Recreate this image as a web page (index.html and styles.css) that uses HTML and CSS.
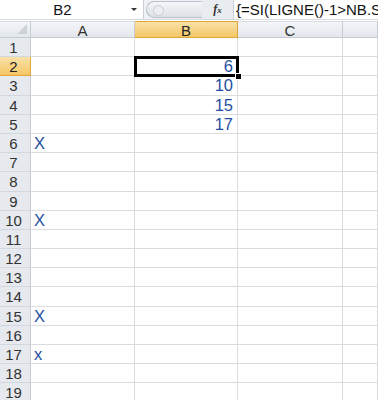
FILE: index.html
```html
<!DOCTYPE html>
<html lang="fr">
  <head>
    <meta charset="UTF-8">
    <title>Feuil1</title>
    <link rel="stylesheet" href="styles.css">
  </head>
  <body>

    <div class="formula-bar">
      <div class="name-box">
        <span class="name-text">B2</span>
        <span class="name-arrow"></span>
      </div>
      <div class="fn-pill"><span class="fn-dot"></span></div>
      <div class="fx">f<i>x</i></div>
      <div class="formula-input">{=SI(LIGNE()-1&gt;NB.S</div>
    </div>

    <div class="sheet">
      <div class="hd corner"><span class="corner-tri"></span></div>
      <div class="hd col">A</div>
      <div class="hd col active">B</div>
      <div class="hd col">C</div>
      <div class="hd col"></div>

      <div class="hd row">1</div><div class="c"></div><div class="c"></div><div class="c"></div><div class="c"></div>
      <div class="hd row active">2</div><div class="c"></div><div class="c num sel">6<span class="handle"></span></div><div class="c"></div><div class="c"></div>
      <div class="hd row">3</div><div class="c"></div><div class="c num">10</div><div class="c"></div><div class="c"></div>
      <div class="hd row">4</div><div class="c"></div><div class="c num">15</div><div class="c"></div><div class="c"></div>
      <div class="hd row">5</div><div class="c"></div><div class="c num">17</div><div class="c"></div><div class="c"></div>
      <div class="hd row">6</div><div class="c txt">X</div><div class="c"></div><div class="c"></div><div class="c"></div>
      <div class="hd row">7</div><div class="c"></div><div class="c"></div><div class="c"></div><div class="c"></div>
      <div class="hd row">8</div><div class="c"></div><div class="c"></div><div class="c"></div><div class="c"></div>
      <div class="hd row">9</div><div class="c"></div><div class="c"></div><div class="c"></div><div class="c"></div>
      <div class="hd row">10</div><div class="c txt">X</div><div class="c"></div><div class="c"></div><div class="c"></div>
      <div class="hd row">11</div><div class="c"></div><div class="c"></div><div class="c"></div><div class="c"></div>
      <div class="hd row">12</div><div class="c"></div><div class="c"></div><div class="c"></div><div class="c"></div>
      <div class="hd row">13</div><div class="c"></div><div class="c"></div><div class="c"></div><div class="c"></div>
      <div class="hd row">14</div><div class="c"></div><div class="c"></div><div class="c"></div><div class="c"></div>
      <div class="hd row">15</div><div class="c txt">X</div><div class="c"></div><div class="c"></div><div class="c"></div>
      <div class="hd row">16</div><div class="c"></div><div class="c"></div><div class="c"></div><div class="c"></div>
      <div class="hd row">17</div><div class="c txt">x</div><div class="c"></div><div class="c"></div><div class="c"></div>
      <div class="hd row">18</div><div class="c"></div><div class="c"></div><div class="c"></div><div class="c"></div>
      <div class="hd row">19</div><div class="c"></div><div class="c"></div><div class="c"></div><div class="c"></div>
    </div>

  </body>
</html>
```

FILE: styles.css
```css
html, body { margin: 0; height: 100%; overflow: hidden }
body { background: #fff; font-family: "Liberation Sans", Arial, sans-serif; width: 378px }

/* formula bar */

.formula-bar {
  display: flex;
  height: 19px;
  background: #eef1f5;
  border-bottom: 1px solid #d6dbe2;
  margin-bottom: 1px;
  overflow: hidden;
}
.name-box {
  width: 143px;
  background: #fff;
  border-right: 1px solid #c9d0d8;
  display: flex;
  align-items: center;
  position: relative;
}
.name-text { flex: 1; text-align: center; font-size: 15px; color: #111; padding-right: 18px }
.name-arrow {
  position: absolute; right: 6px; top: 8px;
  border-left: 3px solid transparent; border-right: 3px solid transparent; border-top: 3px solid #333;
}
.fn-pill {
  width: 55px; margin: 1px 0 1px 2px;
  border: 1px solid #b9c1cc; border-right: none;
  border-radius: 9px 0 0 9px;
  background: linear-gradient(#f4f6f8, #dde1e6);
  position: relative;
}
.fn-dot {
  position: absolute; left: 6px; top: 3px; width: 9px; height: 9px; border-radius: 50%;
  background: #eceef1; border: 1px solid #c6ccd4;
}
.fx {
  width: 31px; text-align: center;
  font-family: "Liberation Serif", serif; font-style: italic; font-weight: bold;
  font-size: 12px; line-height: 19px; color: #333;
  background: #e9ecf0;
}
.fx i { font-size: 9px }
.formula-input {
  flex: 1; background: #fff; border-left: 1px solid #c9d0d8;
  font-size: 15px; line-height: 19px; white-space: nowrap; overflow: hidden; padding-left: 2px; color: #111;
}

/* grid */

.sheet {
  display: grid;
  grid-template-columns: 31px 104px 103px 105px 1fr;
  grid-template-rows: 17px repeat(19, 19.2px);
}
.hd {
  background: linear-gradient(#f3f5f8, #e3e7ec);
  color: #333;
  font-size: 15px;
  border-right: 1px solid #c5cbd3;
  border-bottom: 1px solid #c5cbd3;
  box-sizing: border-box;
}
.hd.col { text-align: center; line-height: 17px; border-top: 1px solid #d7dbe0 }
.hd.row { text-align: center; line-height: 19px; padding-right: 3px; background: #e6e9ee; border-bottom-color: #d2d7de }
.hd.active { background: linear-gradient(#f9e1a8, #f4c765); border-color: #e0a63a; color: #222 }
.corner { position: relative; border-top: 1px solid #d7dbe0 }
.corner-tri {
  position: absolute; right: 3px; bottom: 3px;
  border-left: 10px solid transparent; border-bottom: 10px solid #cdd2d9;
}

.c {
  border-right: 1px solid #dadcdd;
  border-bottom: 1px solid #dadcdd;
  box-sizing: border-box;
  font-size: 16.5px;
  line-height: 19px;
  color: #1f4f9e;
  white-space: nowrap;
}
.c.num { text-align: right; padding-right: 4px }
.c.txt { padding-left: 3px }
.c.sel { position: relative; outline: 3px solid #000; outline-offset: -2px; border-color: #000 }
.handle {
  position: absolute; right: -5px; bottom: -5px; width: 5px; height: 5px;
  background: #000; border: 1px solid #fff;
}
```
